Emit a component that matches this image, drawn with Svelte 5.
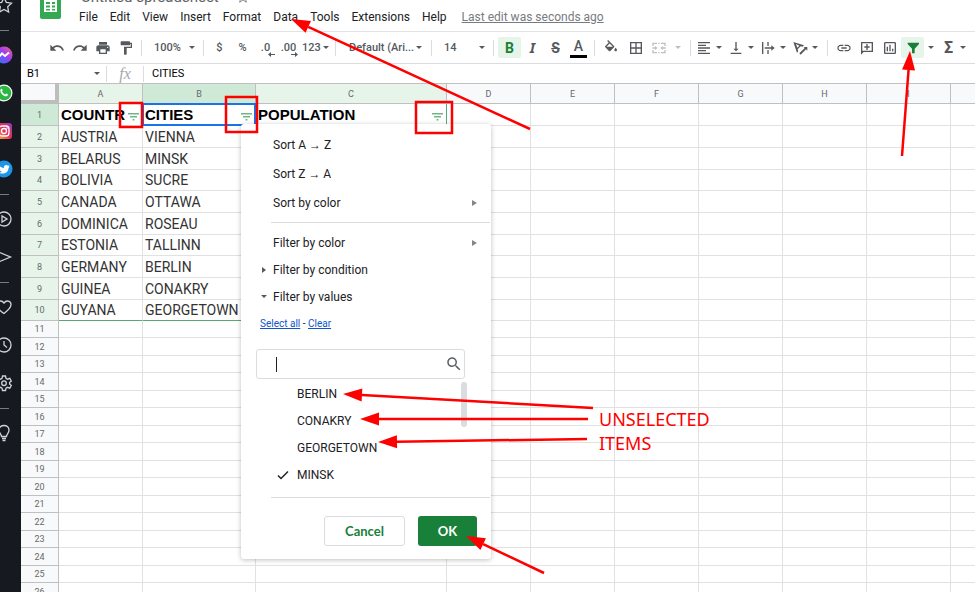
<script>
  const menus = ['File', 'Edit', 'View', 'Insert', 'Format', 'Data', 'Tools', 'Extensions', 'Help'];
  const columns = ['A', 'B', 'C', 'D', 'E', 'F', 'G', 'H', 'I', ''];
  const headings = ['COUNTRY', 'CITIES', 'POPULATION'];

  const data = [
    ['AUSTRIA', 'VIENNA'],
    ['BELARUS', 'MINSK'],
    ['BOLIVIA', 'SUCRE'],
    ['CANADA', 'OTTAWA'],
    ['DOMINICA', 'ROSEAU'],
    ['ESTONIA', 'TALLINN'],
    ['GERMANY', 'BERLIN'],
    ['GUINEA', 'CONAKRY'],
    ['GUYANA', 'GEORGETOWN']
  ];
  const emptyRows = Array.from({ length: 16 }, (_, i) => i + 11);

  let values = [
    { name: 'BERLIN', checked: false },
    { name: 'CONAKRY', checked: false },
    { name: 'GEORGETOWN', checked: false },
    { name: 'MINSK', checked: true }
  ];

  let cellName = 'B1';
  let formula = 'CITIES';
  let search = '';
  let open = true;

  const selectAll = (checked) => {
    values = values.map((v) => ({ ...v, checked }));
  };

  // tail and tip of every arrow
  const arrows = [
    [530, 129, 291, 19],
    [902, 156, 910, 51],
    [593, 408, 343, 394],
    [588, 419, 360, 419],
    [587, 439, 378, 442],
    [544, 573, 466, 536]
  ].map(([x1, y1, x2, y2]) => {
    const len = Math.hypot(x2 - x1, y2 - y1);
    const ux = (x2 - x1) / len;
    const uy = (y2 - y1) / len;
    const bx = x2 - ux * 19;
    const by = y2 - uy * 19;
    return {
      x1, y1, bx, by,
      head: `${x2},${y2} ${bx - uy * 6.5},${by + ux * 6.5} ${bx + uy * 6.5},${by - ux * 6.5}`
    };
  });

  const boxes = [
    [120, 103, 22, 24],
    [226, 97, 31, 35],
    [416, 102, 36, 31]
  ];

  const icons = {
    undo: 'M12.5 8c-2.65 0-5.05.99-6.9 2.6L2 7v9h9l-3.62-3.62c1.39-1.16 3.16-1.88 5.12-1.88 3.54 0 6.55 2.31 7.6 5.5l2.37-.78C21.08 11.03 17.15 8 12.5 8z',
    redo: 'M18.4 10.6C16.55 8.99 14.15 8 11.5 8c-4.65 0-8.58 3.03-9.96 7.22L3.9 16c1.05-3.19 4.05-5.5 7.6-5.5 1.95 0 3.73.72 5.12 1.88L13 16h9V7l-3.6 3.6z',
    print: 'M19 8H5c-1.66 0-3 1.34-3 3v6h4v4h12v-4h4v-6c0-1.66-1.34-3-3-3zm-3 11H8v-5h8v5zm3-7c-.55 0-1-.45-1-1s.45-1 1-1 1 .45 1 1-.45 1-1 1zm-1-9H6v4h12V3z',
    paint: 'M18 4V3c0-.55-.45-1-1-1H5c-.55 0-1 .45-1 1v4c0 .55.45 1 1 1h12c.55 0 1-.45 1-1V6h1v4H9v11c0 .55.45 1 1 1h2c.55 0 1-.45 1-1v-9h8V4h-3z',
    fill: 'M16.56 8.94L7.62 0 6.21 1.41l2.38 2.38-5.15 5.15c-.59.59-.59 1.54 0 2.12l5.5 5.5c.29.29.68.44 1.06.44s.77-.15 1.06-.44l5.5-5.5c.59-.58.59-1.53 0-2.12zM5.21 10L10 5.21 14.79 10H5.21zM19 11.5s-2 2.17-2 3.5c0 1.1.9 2 2 2s2-.9 2-2c0-1.33-2-3.5-2-3.5z',
    borders: 'M3 3v18h18V3H3zm8 16H5v-6h6v6zm0-8H5V5h6v6zm8 8h-6v-6h6v6zm0-8h-6V5h6v6z',
    merge: 'M2 4h7v2H4v3H2zM15 4h7v5h-2V6h-5zM2 15h2v3h5v2H2zM20 15h2v5h-7v-2h5zM11 4h2v2h-2zM11 18h2v2h-2zM2 11h4V9l4 3-4 3v-2H2zM22 11h-4V9l-4 3 4 3v-2h4z',
    align: 'M15 15H3v2h12v-2zm0-8H3v2h12V7zM3 13h18v-2H3v2zm0 8h18v-2H3v2zM3 3v2h18V3H3z',
    valign: 'M16 13h-3V3h-2v10H8l4 4 4-4zM4 19v2h16v-2H4z',
    wrap: 'M3 3h2v18H3zM11 3h2v6h-2zM11 15h2v6h-2zM7 11h10V8l5 4-5 4v-3H7z',
    rotate: 'M2 3l16 5-2 2-3-.7L8.500 14l.9 3-2 2zm4 3l2 5.500 3-3zM11 20l8-8-1.500-1.500H23V16l-2-2-8 8z',
    link: 'M3.9 12c0-1.71 1.39-3.1 3.1-3.1h4V7H7c-2.76 0-5 2.24-5 5s2.24 5 5 5h4v-1.9H7c-1.71 0-3.1-1.39-3.1-3.1zM8 13h8v-2H8v2zm9-6h-4v1.9h4c1.71 0 3.1 1.39 3.1 3.1s-1.39 3.1-3.1 3.1h-4V17h4c2.76 0 5-2.24 5-5s-2.24-5-5-5z',
    comment: 'M3 3h18v15H7l-4 4zm2 2v11h14V5zm6 1h2v3.500h3v2h-3V15h-2v-3.500H8v-2h3z',
    chart: 'M9 17H7v-7h2v7zm4 0h-2V7h2v10zm4 0h-2v-4h2v4zm2 2H5V5h14v14zm0-16H5c-1.1 0-2 .9-2 2v14c0 1.1.9 2 2 2h14c1.1 0 2-.9 2-2V5c0-1.1-.9-2-2-2z',
    filter: 'M4 4h17v2l-6.500 7v7h-4v-7L4 6z'
  };
</script>

{#snippet icon(name)}
  <svg class="icon" viewBox="0 0 24 24" aria-hidden="true"><path d={icons[name]} /></svg>
{/snippet}

<div class="window">
  <nav class="sidebar" aria-label="Browser sidebar">
    <a href="#bookmarks" aria-label="Bookmarks">
      <svg class="line" viewBox="0 0 18 18"><path d="M9 1.500l2.300 4.900 5.200.7-3.800 3.700.9 5.300L9 13.500l-4.600 2.600.9-5.300L1.500 7.100l5.200-.7z" /></svg>
    </a>
    <hr />
    <a href="#messenger" aria-label="Messenger">
      <svg viewBox="0 0 18 18">
        <defs>
          <linearGradient id="msg" x1="0" y1="1" x2="1" y2="0">
            <stop offset="0" stop-color="#1583ff" />
            <stop offset=".55" stop-color="#9a3df5" />
            <stop offset="1" stop-color="#ff5f79" />
          </linearGradient>
        </defs>
        <circle cx="9" cy="9" r="8.500" fill="url(#msg)" />
        <path d="M3.500 11.500L7 7.500l3 2.500 4-3.500" fill="none" stroke="#fff" stroke-width="2" />
      </svg>
    </a>
    <a href="#whatsapp" aria-label="WhatsApp">
      <svg viewBox="0 0 18 18">
        <circle cx="9" cy="9" r="8.500" fill="#fff" />
        <circle cx="9" cy="9" r="7.300" fill="#2bb741" />
        <path d="M5.500 5.500c1-1.500 1.800-.5 2.200.8l-.7 1.200c.8 1.500 1.800 2.300 3.200 3l1-1c1.600.5 2.400 1.200 1 2.400-3 1.800-7.800-3.400-6.700-6.400z" fill="#fff" />
      </svg>
    </a>
    <a href="#instagram" aria-label="Instagram">
      <svg viewBox="0 0 18 18">
        <defs>
          <linearGradient id="insta" x1="0" y1="1" x2="1" y2="0">
            <stop offset="0" stop-color="#fdc04a" />
            <stop offset=".5" stop-color="#e8314f" />
            <stop offset="1" stop-color="#9a35c5" />
          </linearGradient>
        </defs>
        <rect x="1" y="1" width="16" height="16" rx="3" fill="url(#insta)" />
        <g fill="none" stroke="#fff" stroke-width="1.300">
          <rect x="4" y="4" width="10" height="10" rx="3" />
          <circle cx="9" cy="9" r="2.500" />
        </g>
        <circle cx="12" cy="6" r=".8" fill="#fff" />
      </svg>
    </a>
    <a href="#twitter" aria-label="Twitter">
      <svg viewBox="0 0 18 18">
        <circle cx="9" cy="9" r="8.500" fill="#1d96e8" />
        <path d="M4 5.500c1.300 1.500 3 2.400 5 2.400-.4-2.600 2.400-3.700 4-2.100l1.500-.6-.9 1.600 1.100-.2-1.200 1.300c0 4.900-5.400 7-9.700 4.800 1.400 0 2.300-.3 3.100-1-1.300-.2-1.800-.8-2.200-1.700h1C4.300 9.400 4 8.500 4 7.800l.9.2C3.900 7.200 3.600 6.500 4 5.500z" fill="#fff" />
      </svg>
    </a>
    <hr />
    <a href="#player" aria-label="Player">
      <svg class="line" viewBox="0 0 18 18"><circle cx="9" cy="9" r="7" /><path d="M7 6v6l5-3z" /></svg>
    </a>
    <a href="#flow" aria-label="My Flow">
      <svg class="line" viewBox="0 0 18 18"><path d="M1 3l14.500 6L1 15l2-6z" /></svg>
    </a>
    <hr />
    <a href="#pinboards" aria-label="Pinboards">
      <svg class="line" viewBox="0 0 18 18"><path d="M9 15.500C4 12 1.500 9.500 1.500 6.500 1.500 3 6.500 1.500 9 5c2.500-3.500 7-2 7 1.500 0 3-2.500 5.500-7 9z" /></svg>
    </a>
    <a href="#history" aria-label="History">
      <svg class="line" viewBox="0 0 18 18"><circle cx="9" cy="9" r="7" /><path d="M9 5v4l3 2.500" /></svg>
    </a>
    <a href="#settings" aria-label="Settings">
      <svg class="line" viewBox="0 0 18 18"><path d="M7.500 2h3l.5 2.300 1.500.9 2.300-.8 1.500 2.600-1.700 1.500v1.500l1.700 1.500-1.500 2.600-2.300-.8-1.500.9-.5 2.300h-3L7 14.200l-1.500-.9-2.300.8-1.500-2.600L3.400 10V8.500L1.700 7l1.500-2.600 2.300.8L7 4.300z" /><circle cx="9" cy="9.200" r="2.300" /></svg>
    </a>
    <hr />
    <a href="#tips" aria-label="Tips">
      <svg class="line" viewBox="0 0 18 18"><path d="M6.500 12.500C6.500 10 4 9.500 4 6c0-6 10-6 10 0 0 3.500-2.500 4-2.500 6.500zM7 14.500h4M7.500 16.500h3" /></svg>
    </a>
  </nav>

  <main>
    <header>
      <svg class="logo" viewBox="0 0 21 30" aria-label="Sheets">
        <rect width="21" height="30" rx="2" fill="#34a853" />
        <path d="M4 11h13v12H4zm2 2v2h4v-2zm6 0v2h3v-2zm-6 3.500v2h4v-2zm6 0v2h3v-2zM6 20v1.500h4V20zm6 0v1.500h3V20z" fill="#fff" fill-rule="evenodd" />
      </svg>
      <div class="titles">
        <div class="title">
          <span>Untitled spreadsheet</span>
          <svg viewBox="0 0 16 16" aria-hidden="true"><path d="M8 1l2 5h5l-4 3.500 1.500 5.500L8 12l-4.500 3L5 9.500 1 6h5z" /></svg>
        </div>
        <div class="menubar">
          {#each menus as menu}
            <button type="button">{menu}</button>
          {/each}
          <a href="#history">Last edit was seconds ago</a>
        </div>
      </div>
    </header>

    <div class="toolbar" role="toolbar" aria-label="Formatting">
      <button type="button" aria-label="Undo">{@render icon('undo')}</button>
      <button type="button" aria-label="Redo">{@render icon('redo')}</button>
      <button type="button" aria-label="Print">{@render icon('print')}</button>
      <button type="button" aria-label="Paint format">{@render icon('paint')}</button>
      <span class="sep"></span>
      <label class="pick">
        <select aria-label="Zoom"><option>100%</option></select>
        <span class="caret"></span>
      </label>
      <span class="sep"></span>
      <button type="button">$</button>
      <button type="button">%</button>
      <button type="button" class="decimal" aria-label="Decrease decimal places">
        .0<svg viewBox="0 0 7 5"><path d="M7 2H3V0L0 2.500 3 5V3h4z" /></svg>
      </button>
      <button type="button" class="decimal" aria-label="Increase decimal places">
        .00<svg viewBox="0 0 7 5"><path d="M0 2h4V0l3 2.500L4 5V3H0z" /></svg>
      </button>
      <button type="button" class="format">123<span class="caret"></span></button>
      <span class="sep"></span>
      <label class="pick font">
        <select aria-label="Font"><option>Default (Ari...</option></select>
        <span class="caret"></span>
      </label>
      <span class="sep"></span>
      <label class="pick">
        <select aria-label="Font size"><option>14</option></select>
        <span class="caret"></span>
      </label>
      <span class="sep"></span>
      <button type="button" class="glyph active">B</button>
      <button type="button" class="glyph italic">I</button>
      <button type="button" class="glyph strike">S</button>
      <button type="button" class="glyph color">A</button>
      <span class="sep"></span>
      <button type="button" aria-label="Fill color">{@render icon('fill')}</button>
      <button type="button" class="wide" aria-label="Borders">{@render icon('borders')}</button>
      <button type="button" class="split merge" aria-label="Merge cells" disabled>{@render icon('merge')}<span class="caret"></span></button>
      <span class="sep"></span>
      <button type="button" class="split" aria-label="Horizontal align">{@render icon('align')}<span class="caret"></span></button>
      <button type="button" class="split" aria-label="Vertical align">{@render icon('valign')}<span class="caret"></span></button>
      <button type="button" class="split" aria-label="Text wrapping">{@render icon('wrap')}<span class="caret"></span></button>
      <button type="button" class="split" aria-label="Text rotation">{@render icon('rotate')}<span class="caret"></span></button>
      <span class="sep"></span>
      <button type="button" aria-label="Insert link">{@render icon('link')}</button>
      <button type="button" aria-label="Insert comment">{@render icon('comment')}</button>
      <button type="button" aria-label="Insert chart">{@render icon('chart')}</button>
      <button type="button" class="active" aria-label="Turn off filter">{@render icon('filter')}</button>
      <button type="button" class="narrow" aria-label="Filter views"><span class="caret"></span></button>
      <button type="button" class="glyph sum">Σ<span class="caret"></span></button>
    </div>

    <div class="formula">
      <input class="name" aria-label="Name box" bind:value={cellName} />
      <span class="caret"></span>
      <span class="fx">fx</span>
      <input class="value" aria-label="Formula" bind:value={formula} />
    </div>

    <div class="sheet">
      <table>
        <colgroup>
          <col class="c-num" />
          {#each columns as col}
            <col class="c-{col}" />
          {/each}
        </colgroup>
        <thead>
          <tr>
            <th class="corner"></th>
            {#each columns as col, i}
              <th class:ranged={i < 3} class:current={i === 1}>{col}</th>
            {/each}
          </tr>
        </thead>
        <tbody class="filled">
          <tr class="headings">
            <th class="current">1</th>
            {#each columns as col, i}
              <td class:selected={i === 1} class:last={i === 2}>
                {#if headings[i]}
                  <div class="heading">
                    <span>{headings[i]}</span>
                    <button type="button" aria-label="Filter {headings[i]}" on:click={() => (open = !open)}>
                      <svg viewBox="0 0 11 8"><path d="M0 0h11v1.500H0zM2 3h7v1.500H2zM4.500 6h2v1.500h-2z" /></svg>
                    </button>
                  </div>
                {/if}
              </td>
            {/each}
          </tr>
          {#each data as row, r}
            <tr>
              <th>{r + 2}</th>
              {#each columns as col, i}
                <td class:last={i === 2} class:bottom={r === data.length - 1 && i < 3}>{row[i] ?? ''}</td>
              {/each}
            </tr>
          {/each}
        </tbody>
        <tbody class="empty">
          {#each emptyRows as n}
            <tr>
              <th>{n}</th>
              {#each columns as col}
                <td></td>
              {/each}
            </tr>
          {/each}
        </tbody>
      </table>

      {#if open}
        <div class="popup">
          <button type="button" class="item">Sort A → Z</button>
          <button type="button" class="item">Sort Z → A</button>
          <button type="button" class="item">Sort by color<span class="more"></span></button>
          <hr />
          <button type="button" class="item tight">Filter by color<span class="more"></span></button>
          <button type="button" class="item tight"><span class="toggle closed"></span>Filter by condition</button>
          <button type="button" class="item tight"><span class="toggle"></span>Filter by values</button>
          <div class="links">
            <a href="#all" on:click|preventDefault={() => selectAll(true)}>Select all</a> -
            <a href="#none" on:click|preventDefault={() => selectAll(false)}>Clear</a>
          </div>
          <div class="search">
            <span class="cursor"></span>
            <input type="text" aria-label="Search values" bind:value={search} />
            <svg viewBox="0 0 24 24" aria-hidden="true"><path d="M15.5 14h-.79l-.28-.27C15.41 12.59 16 11.11 16 9.5 16 5.91 13.09 3 9.5 3S3 5.91 3 9.5 5.91 16 9.5 16c1.61 0 3.09-.59 4.23-1.57l.27.28v.79l5 4.99L20.49 19l-4.99-5zm-6 0C7.01 14 5 11.99 5 9.5S7.01 5 9.5 5 14 7.01 14 9.5 11.99 14 9.5 14z" /></svg>
          </div>
          <div class="values">
            {#each values as value}
              <label>
                <input type="checkbox" bind:checked={value.checked} />
                <svg viewBox="0 0 12 10" aria-hidden="true"><path d="M1 5.500L4 8.500 11 1.500" /></svg>
                {value.name}
              </label>
            {/each}
            <span class="thumb"></span>
          </div>
          <hr />
          <div class="actions">
            <button type="button" on:click={() => (open = false)}>Cancel</button>
            <button type="button" class="ok" on:click={() => (open = false)}>OK</button>
          </div>
        </div>
      {/if}
    </div>
  </main>

  <svg class="marks" aria-hidden="true">
    {#each boxes as [x, y, width, height]}
      <rect {x} {y} {width} {height} />
    {/each}
    {#each arrows as a}
      <line x1={a.x1} y1={a.y1} x2={a.bx} y2={a.by} />
      <polygon points={a.head} />
    {/each}
  </svg>
  <p class="note">UNSELECTED<br />ITEMS</p>
</div>

<style>
  :global(body) {
    background: #fff;
    overflow: hidden;
  }

  .window {
    position: relative;
    display: flex;
    box-sizing: border-box;
    height: 100vh;
    padding: 0 2px 1px 0;
    overflow: hidden;
    font-family: Roboto, "Liberation Sans", sans-serif;
    font-size: 12px;
    color: #202124;
  }

  button {
    padding: 0;
    border: 0;
    background: none;
    font: inherit;
    color: inherit;
    cursor: pointer;
  }

  .sidebar {
    flex: none;
    width: 21px;
    overflow: hidden;
    background: #161a20;
  }

  .sidebar a {
    display: flex;
    align-items: center;
    justify-content: center;
    width: 34px;
    height: 38px;
    margin-left: -13px;
  }

  .sidebar a:first-child {
    margin-top: -14px;
  }

  .sidebar svg {
    width: 18px;
    height: 18px;
  }

  .sidebar .line {
    fill: none;
    stroke: #d0d3d7;
    stroke-width: 1.3;
  }

  .sidebar hr {
    width: 9px;
    height: 1px;
    margin: 6px 0 5px;
    border: 0;
    background: #777c82;
  }

  main {
    flex: 1;
    min-width: 0;
    display: flex;
    flex-direction: column;
    overflow: hidden;
  }

  header {
    display: flex;
    flex: none;
    align-items: flex-end;
    gap: 18px;
    height: 32px;
    padding-left: 19px;
    border-bottom: 1px solid #e1e3e6;
    box-sizing: border-box;
    overflow: hidden;
  }

  .logo {
    width: 21px;
    height: 30px;
    margin-bottom: 12px;
  }

  .title {
    display: flex;
    align-items: center;
    gap: 18px;
    height: 20px;
    margin-left: 2px;
    font-size: 15px;
    line-height: 20px;
    color: #5f6368;
  }

  .title svg {
    width: 12px;
    height: 12px;
    fill: none;
    stroke: #5f6368;
  }

  .menubar {
    display: flex;
    align-items: center;
    gap: 12px;
    height: 20px;
    padding-bottom: 4px;
  }

  .menubar a {
    margin-left: 3px;
    color: #777b80;
  }

  .toolbar {
    display: flex;
    flex: none;
    align-items: center;
    box-sizing: border-box;
    height: 32px;
    padding-left: 24px;
    border-bottom: 1px solid #dadce0;
    font-size: 11px;
    font-weight: 500;
    color: #55595e;
    overflow: hidden;
  }

  .toolbar button {
    display: flex;
    flex: none;
    align-items: center;
    justify-content: center;
    width: 23px;
    height: 21px;
    border-radius: 2px;
  }

  .icon {
    flex: none;
    width: 16px;
    height: 16px;
    fill: currentColor;
  }

  .sep {
    flex: none;
    width: 1px;
    height: 16px;
    margin: 0 4px;
    background: #dadce0;
  }

  .caret {
    flex: none;
    width: 0;
    height: 0;
    border: 3px solid transparent;
    border-top-color: currentColor;
    border-bottom: 0;
  }

  .pick {
    display: flex;
    flex: none;
    align-items: center;
    box-sizing: border-box;
    width: 53px;
    padding: 0 4px 0 8px;
  }

  .pick.font {
    width: 87px;
    padding-left: 9px;
    padding-right: 5px;
  }

  .pick select {
    flex: 1;
    min-width: 0;
    padding: 0;
    border: 0;
    appearance: none;
    background: none;
    font: inherit;
    color: inherit;
  }

  .toolbar .decimal {
    position: relative;
  }

  .decimal svg {
    position: absolute;
    right: 2px;
    bottom: 1px;
    width: 7px;
    height: 5px;
    fill: currentColor;
  }

  .toolbar .format {
    width: 31px;
    gap: 2px;
  }

  .toolbar .glyph {
    font-size: 14px;
    font-weight: 700;
  }

  .toolbar .italic {
    font-family: "Noto Sans", sans-serif;
    font-style: italic;
  }

  .strike {
    text-decoration: line-through;
  }

  .toolbar .color {
    box-sizing: border-box;
    width: 17px;
    margin: 0 3px;
    border-bottom: 3px solid #000;
    border-radius: 0;
    font-weight: 500;
  }

  .toolbar .active {
    background: #e6f4ea;
    color: #188038;
  }

  .toolbar .wide {
    width: 28px;
  }

  .toolbar .narrow {
    width: 14px;
  }

  .toolbar .split {
    justify-content: flex-start;
    gap: 4px;
    width: 32px;
    padding-left: 1px;
  }

  .toolbar .merge {
    gap: 8px;
    width: 36px;
    color: #bdbfc2;
  }

  .toolbar .sum {
    gap: 7px;
    width: 34px;
    font-size: 16px;
  }

  .formula {
    display: flex;
    flex: none;
    align-items: center;
    box-sizing: border-box;
    height: 20px;
    border-bottom: 1px solid #c0c0c0;
    color: #55595e;
  }

  .formula input {
    min-width: 0;
    padding: 0;
    border: 0;
    outline: none;
    background: none;
    font: inherit;
    font-size: 11px;
    color: #000;
  }

  .formula .name {
    width: 67px;
    padding-left: 6px;
  }

  .fx {
    width: 36px;
    margin-left: 6px;
    border: 1px solid #dadce0;
    border-width: 0 1px;
    font: italic 16px/16px "Liberation Serif", serif;
    text-align: center;
    color: #a5a8ac;
  }

  .formula .value {
    flex: 1;
    padding-left: 8px;
  }

  .sheet {
    position: relative;
    flex: 1;
    min-height: 0;
    overflow: hidden;
  }

  table {
    width: 0;
    table-layout: fixed;
    border-spacing: 0;
  }

  col {
    width: 84px;
  }

  .c-num {
    width: 38px;
  }

  .c-B {
    width: 113px;
  }

  .c-C {
    width: 191px;
  }

  th,
  td {
    box-sizing: border-box;
    padding: 0;
    border: 1px solid #e1e1e1;
    border-width: 0 1px 1px 0;
    white-space: nowrap;
  }

  th {
    border-color: #c0c0c0;
    background: #f8f9fa;
    font-size: 9px;
    font-weight: 400;
    line-height: 10px;
    color: #66696d;
  }

  thead th {
    height: 20px;
  }

  .corner {
    border: 4px solid #bdbdbd;
    border-width: 0 4px 4px 0;
  }

  .ranged,
  .filled th {
    background: #e6f4ea;
  }

  th.current,
  .filled th.current {
    background: #ceead6;
  }

  .filled tr {
    height: 22px;
  }

  .filled tr:nth-child(3n + 4) {
    height: 21px;
  }

  .filled td {
    padding-left: 2px;
    font-size: 14px;
    line-height: 20px;
    color: #333;
  }

  .filled .last {
    border-right-color: #57a872;
  }

  .filled .bottom {
    border-bottom-color: #57a872;
  }

  .empty tr {
    height: 17px;
  }

  .empty tr:nth-child(even) {
    height: 18px;
  }

  .headings .selected {
    position: relative;
  }

  .selected::after {
    content: "";
    position: absolute;
    inset: -1px;
    border: 2px solid #1a73e8;
    pointer-events: none;
  }

  .heading {
    display: flex;
    font-family: "Liberation Sans", sans-serif;
    font-size: 15px;
    font-weight: 700;
    color: #000;
  }

  .heading span {
    flex: 1;
    min-width: 0;
    overflow: hidden;
  }

  .heading button {
    display: flex;
    align-items: center;
    flex: none;
    width: 17px;
    padding: 4px 0 0 3px;
  }

  .heading svg {
    width: 11px;
    height: 8px;
    fill: #6fb585;
  }

  .popup {
    position: absolute;
    top: 40px;
    left: 220px;
    box-sizing: border-box;
    width: 250px;
    padding: 6px 0 13px;
    border-radius: 3px;
    background: #fff;
    box-shadow: 0 1px 5px rgba(0, 0, 0, 0.25);
  }

  .item {
    display: flex;
    align-items: center;
    box-sizing: border-box;
    width: 100%;
    height: 29px;
    padding: 0 14px 0 32px;
  }

  .item.tight {
    height: 27px;
  }

  .more {
    margin-left: auto;
    border: 3px solid transparent;
    border-left: 5px solid #80868b;
    border-right: 0;
  }

  .toggle {
    margin: 0 6px 0 -12px;
    border: 3px solid transparent;
    border-top-color: #55595e;
    border-bottom: 0;
  }

  .toggle.closed {
    margin-right: 7px;
    margin-left: -11px;
    border: 3px solid transparent;
    border-left: 4px solid #55595e;
    border-right: 0;
  }

  .popup hr {
    height: 1px;
    margin: 5px 1px 6px 30px;
    border: 0;
    background: #dadce0;
  }

  .links {
    padding-left: 19px;
    font-size: 10px;
    line-height: 27px;
  }

  .links a {
    color: #1155cc;
  }

  .search {
    display: flex;
    align-items: center;
    box-sizing: border-box;
    height: 30px;
    margin: 12px 26px 1px 15px;
    padding: 0 1px 0 19px;
    border: 1px solid #dadce0;
    border-radius: 3px;
  }

  .search input {
    flex: 1;
    min-width: 0;
    border: 0;
    outline: none;
    font: inherit;
  }

  .search svg {
    width: 18px;
    height: 18px;
    fill: #5f6368;
  }

  .cursor {
    width: 1px;
    height: 15px;
    background: #202124;
  }

  .values {
    position: relative;
  }

  .values label {
    display: flex;
    align-items: center;
    height: 27px;
    padding-left: 36px;
  }

  .values input {
    appearance: none;
    width: 0;
    height: 0;
    margin: 0;
  }

  .values svg {
    visibility: hidden;
    width: 12px;
    height: 10px;
    margin-right: 8px;
    fill: none;
    stroke: #202124;
    stroke-width: 1.5;
  }

  .values input:checked + svg {
    visibility: visible;
  }

  .thumb {
    position: absolute;
    top: 2px;
    right: 24px;
    width: 6px;
    height: 45px;
    border-radius: 3px;
    background: #dadce0;
  }

  .popup .values + hr {
    margin-top: 9px;
    margin-bottom: 18px;
  }

  .actions {
    display: flex;
    justify-content: flex-end;
    gap: 13px;
    padding-right: 14px;
  }

  .actions button {
    box-sizing: border-box;
    width: 81px;
    height: 30px;
    border: 1px solid #dadce0;
    border-radius: 3px;
    font-family: Lato, sans-serif;
    font-size: 13px;
    font-weight: 700;
    color: #188038;
  }

  .actions .ok {
    width: 59px;
    border: 0;
    background: #188038;
    color: #fff;
  }

  .marks {
    position: absolute;
    inset: 0;
    width: 100%;
    height: 100%;
    pointer-events: none;
    stroke: #f00;
    stroke-width: 2.5;
    fill: none;
  }

  .marks polygon {
    fill: #f00;
    stroke: none;
  }

  .note {
    position: absolute;
    top: 407px;
    left: 599px;
    margin: 0;
    font: 18px/24px "Noto Sans", sans-serif;
    color: #f00;
  }
</style>
